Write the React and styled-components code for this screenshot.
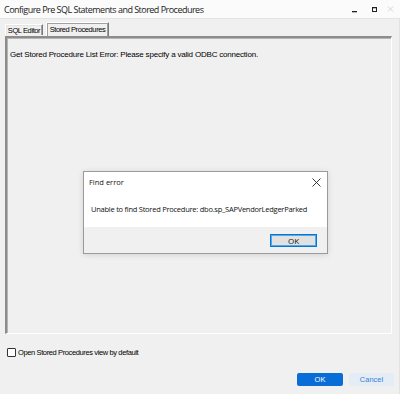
import styled, { createGlobalStyle } from "styled-components"

const Global = createGlobalStyle`
    html, body {
        margin: 0;
        padding: 0;
        background: #f0f0f0;
    }
    * { box-sizing: border-box; }
`

const Window = styled.div`
    width: 400px;
    height: 394px;
    display: flex;
    flex-direction: column;
    background: #f0f0f0;
    font-family: "Liberation Sans", Arial, sans-serif;
    color: #000;
    overflow: hidden;
`

const TitleBar = styled.div`
    height: 19px;
    flex: none;
    display: flex;
    align-items: center;
    padding-left: 4px;
    background: #fbfbfb;
    border-bottom: 1px solid #e4e4e4;
`

const Title = styled.div`
    flex: 1;
    font-family: "Open Sans", sans-serif;
    font-size: 9px;
    letter-spacing: -0.52px;
    color: #1a1a1a;
    padding-top: 1px;
`

const Controls = styled.div`
    display: flex;
    align-items: center;
    padding-right: 6px;
`

const Ctrl = styled.svg`
    display: block;
    margin-left: ${p => p.$ml}px;
`

const Body = styled.div`
    flex: 1;
    display: flex;
    flex-direction: column;
    padding: 3px 7px 0 5px;
    border-right: 1px solid #e2e2e2;
`

const Tabs = styled.div`
    display: flex;
    gap: 3px;
    height: 14px;
    align-items: flex-end;
`

const Tab = styled.div`
    width: ${p => p.$w}px;
    height: ${p => (p.$active ? "14px" : "11px")};
    display: flex;
    align-items: center;
    justify-content: center;
    font-size: 7.5px;
    letter-spacing: -0.4px;
    background: #f0f0f0;
    border: 1px solid #fff;
    border-right-color: #7a7a7a;
    border-bottom: none;
    box-shadow: inset -1px 0 0 #a0a0a0, inset 1px 1px 0 ${p => (p.$active ? "#a0a0a0" : "#e3e3e3")};
    margin-bottom: ${p => (p.$active ? "0" : "1px")};
`

const Panel = styled.div`
    position: relative;
    height: 298px;
    border-top: 2px solid #8c8c8c;
    border-left: 2px solid #8c8c8c;
    border-right: 1px solid #fff;
    border-bottom: 1px solid #fff;
    box-shadow: inset 0 1px 0 #b5b5b5, inset 1px 0 0 #b5b5b5;
    background: #f0f0f0;
    padding: 12px 0 0 3px;
`

const Message = styled.div`
    font-size: 8px;
    letter-spacing: -0.2px;
`

const Dialog = styled.div`
    position: absolute;
    left: 76px;
    top: 133px;
    width: 245px;
    height: 83px;
    display: flex;
    flex-direction: column;
    background: #fff;
    border: 1px solid #9a9a9a;
    box-shadow: 0 1px 6px rgba(0, 0, 0, 0.12);
    font-family: "Open Sans", sans-serif;
`

const DialogHead = styled.div`
    height: 20px;
    display: flex;
    align-items: center;
    justify-content: space-between;
    padding: 0 6px 0 5px;
    font-size: 7.5px;
    color: #111;
`

const DialogText = styled.div`
    flex: 1;
    padding: 12px 0 0 7px;
    font-size: 7.5px;
    letter-spacing: -0.25px;
    color: #111;
`

const DialogFoot = styled.div`
    height: 26px;
    display: flex;
    align-items: center;
    justify-content: flex-end;
    padding-right: 10px;
    background: #f0f0f0;
`

const DialogButton = styled.div`
    width: 47px;
    height: 13px;
    display: flex;
    align-items: center;
    justify-content: center;
    background: #e1e1e1;
    border: 1px solid #0078d7;
    box-shadow: inset 0 0 0 1px #5ca6e6;
    font-size: 8px;
    color: #111;
`

const Footer = styled.div`
    flex: 1;
    display: flex;
    flex-direction: column;
    padding-top: 14px;
`

const CheckRow = styled.label`
    display: flex;
    align-items: center;
    gap: 2px;
    padding-left: 2px;
    font-size: 7.5px;
    letter-spacing: -0.38px;
`

const Box = styled.span`
    width: 9px;
    height: 9px;
    border: 1px solid #333;
    background: #fff;
    border-radius: 1px;
`

const Buttons = styled.div`
    display: flex;
    justify-content: flex-end;
    gap: 6px;
    margin-top: 16px;
    margin-right: -2px;
`

const Button = styled.div`
    width: ${p => p.$w}px;
    height: 13px;
    display: flex;
    align-items: center;
    justify-content: center;
    border-radius: 2px;
    font-size: 7.5px;
    background: ${p => (p.$primary ? "#0a6cd6" : "#e4ecf6")};
    color: ${p => (p.$primary ? "#fff" : "#3d7fd0")};
`

const App = () => {
    return (
        <Window>
            <Global />
            <TitleBar>
                <Title>Configure Pre SQL Statements and Stored Procedures</Title>
                <Controls>
                    <Ctrl width="8" height="8" viewBox="0 0 8 8" $ml={0}>
                        <rect x="1" y="6" width="5" height="1.3" fill="#222" />
                    </Ctrl>
                    <Ctrl width="8" height="8" viewBox="0 0 8 8" $ml={11}>
                        <rect x="2.5" y="2.5" width="4" height="4" fill="none" stroke="#222" strokeWidth="1" />
                        <rect x="2" y="2" width="5" height="1.3" fill="#222" />
                    </Ctrl>
                    <Ctrl width="8" height="8" viewBox="0 0 8 8" $ml={8}>
                        <path d="M2 1.5 L7 6.5 M7 1.5 L2 6.5" stroke="#d6d6d6" strokeWidth="1" />
                    </Ctrl>
                </Controls>
            </TitleBar>
            <Body>
                <Tabs>
                    <Tab $w={38}>SQL Editor</Tab>
                    <Tab $w={63} $active>Stored Procedures</Tab>
                </Tabs>
                <Panel>
                    <Message>Get Stored Procedure List Error: Please specify a valid ODBC connection.</Message>
                    <Dialog>
                        <DialogHead>
                            <span>Find error</span>
                            <svg width="9" height="9" viewBox="0 0 9 9">
                                <path d="M0.5 0.5 L8.5 8.5 M8.5 0.5 L0.5 8.5" stroke="#222" strokeWidth="0.9" />
                            </svg>
                        </DialogHead>
                        <DialogText>Unable to find Stored Procedure: dbo.sp_SAPVendorLedgerParked</DialogText>
                        <DialogFoot>
                            <DialogButton>OK</DialogButton>
                        </DialogFoot>
                    </Dialog>
                </Panel>
                <Footer>
                    <CheckRow>
                        <Box />
                        Open Stored Procedures view by default
                    </CheckRow>
                    <Buttons>
                        <Button $primary $w={46}>OK</Button>
                        <Button $w={45}>Cancel</Button>
                    </Buttons>
                </Footer>
            </Body>
        </Window>
    )
}

export default App
